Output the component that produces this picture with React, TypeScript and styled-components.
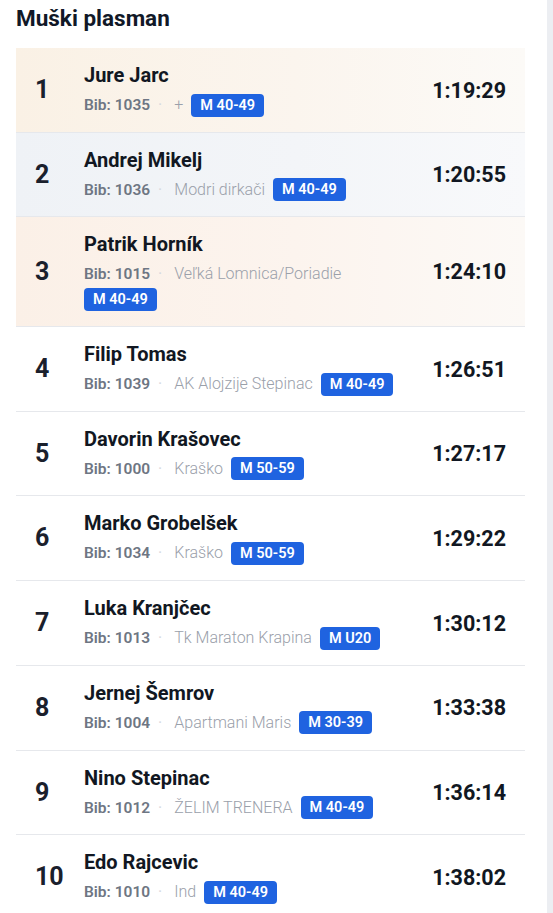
import styled, { createGlobalStyle } from "styled-components";

const GlobalStyle = createGlobalStyle`
  html, body {
    margin: 0;
    padding: 0;
    background: #ffffff;
  }
  body {
    font-family: Roboto, "Noto Sans", "Liberation Sans", sans-serif;
    color: #111827;
  }
`;

const Page = styled.div`
  display: flex;
  min-height: 913px;
  border-right: 6px solid #eceef2;
`;

const Content = styled.div`
  flex: 1;
  padding: 5px 22px 0 16px;
`;

const Title = styled.h2`
  margin: 0 0 17px 0;
  font-size: 22.5px;
  line-height: 26px;
  font-weight: 700;
  color: #111827;
`;

const List = styled.div`
  display: flex;
  flex-direction: column;
`;

const tints: Record<number, string> = {
  1: "linear-gradient(90deg, #faf1e5 0%, #fbf5ee 55%, #fcfaf7 100%)",
  2: "linear-gradient(90deg, #eff2f6 0%, #f3f5f8 55%, #f8f9fb 100%)",
  3: "linear-gradient(90deg, #fbf0e7 0%, #fcf4ee 55%, #fcf9f6 100%)",
};

const Row = styled.div<{ $rank: number }>`
  display: flex;
  align-items: center;
  gap: 12px;
  padding: 15px 19px 14.7px 19px;
  background: ${(p) => tints[p.$rank] || "#ffffff"};
  border-bottom: 1px solid #e6e8ec;
`;

const Rank = styled.div`
  width: 37px;
  flex-shrink: 0;
  font-size: 25px;
  font-weight: 700;
  color: #1a202c;
  line-height: 30px;
`;

const Info = styled.div`
  flex: 1;
  min-width: 0;
  display: flex;
  flex-direction: column;
  gap: 6px;
`;

const Name = styled.div`
  font-size: 20px;
  font-weight: 700;
  line-height: 24px;
  color: #111722;
`;

const Meta = styled.div`
  display: flex;
  flex-wrap: wrap;
  align-items: center;
  column-gap: 8px;
  row-gap: 2px;
  font-size: 16px;
  line-height: 24px;
`;

const Bib = styled.span`
  font-size: 15.5px;
  font-weight: 600;
  color: #6e7683;
`;

const Dot = styled.span`
  color: #d6d9de;
  font-weight: 400;
  margin-right: 4px;
`;

const Team = styled.span`
  font-weight: 300;
  color: #9aa0aa;
`;

const Badge = styled.span`
  display: inline-flex;
  align-items: center;
  height: 23px;
  padding: 0 9px;
  border-radius: 4px;
  background: #1f63e0;
  color: #ffffff;
  font-size: 14.5px;
  font-weight: 600;
  line-height: 23px;
`;

const Time = styled.div`
  min-width: 96px;
  flex-shrink: 0;
  text-align: right;
  font-size: 21.5px;
  font-weight: 700;
  color: #111722;
`;

type Result = {
  rank: number;
  name: string;
  bib: string;
  team: string;
  cat: string;
  time: string;
};

const results: Result[] = [
  { rank: 1, name: "Jure Jarc", bib: "1035", team: "+", cat: "M 40-49", time: "1:19:29" },
  { rank: 2, name: "Andrej Mikelj", bib: "1036", team: "Modri dirkači", cat: "M 40-49", time: "1:20:55" },
  { rank: 3, name: "Patrik Horník", bib: "1015", team: "Veľká Lomnica/Poriadie", cat: "M 40-49", time: "1:24:10" },
  { rank: 4, name: "Filip Tomas", bib: "1039", team: "AK Alojzije Stepinac", cat: "M 40-49", time: "1:26:51" },
  { rank: 5, name: "Davorin Krašovec", bib: "1000", team: "Kraško", cat: "M 50-59", time: "1:27:17" },
  { rank: 6, name: "Marko Grobelšek", bib: "1034", team: "Kraško", cat: "M 50-59", time: "1:29:22" },
  { rank: 7, name: "Luka Kranjčec", bib: "1013", team: "Tk Maraton Krapina", cat: "M U20", time: "1:30:12" },
  { rank: 8, name: "Jernej Šemrov", bib: "1004", team: "Apartmani Maris", cat: "M 30-39", time: "1:33:38" },
  { rank: 9, name: "Nino Stepinac", bib: "1012", team: "ŽELIM TRENERA", cat: "M 40-49", time: "1:36:14" },
  { rank: 10, name: "Edo Rajcevic", bib: "1010", team: "Ind", cat: "M 40-49", time: "1:38:02" },
];

export default function App() {
  return (
    <>
      <GlobalStyle />
      <Page>
        <Content>
          <Title>Muški plasman</Title>
          <List>
            {results.map((r) => (
              <Row key={r.rank} $rank={r.rank}>
                <Rank>{r.rank}</Rank>
                <Info>
                  <Name>{r.name}</Name>
                  <Meta>
                    <Bib>Bib: {r.bib}</Bib>
                    <Dot>·</Dot>
                    <Team>{r.team}</Team>
                    <Badge>{r.cat}</Badge>
                  </Meta>
                </Info>
                <Time>{r.time}</Time>
              </Row>
            ))}
          </List>
        </Content>
      </Page>
    </>
  );
}
